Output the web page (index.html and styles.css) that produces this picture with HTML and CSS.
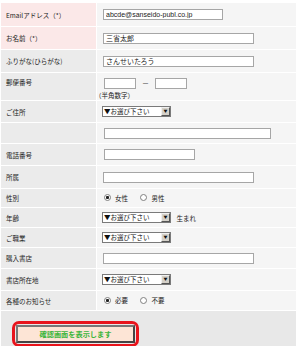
FILE: index.html
```html
<!DOCTYPE html>
<html>
<head>
  <meta charset="utf-8">
  <title>お問い合わせフォーム</title>
  <link rel="stylesheet" href="styles.css">
</head>
<body>
  <table class="form">
    <tr class="req h23">
      <th>Emailアドレス（*）</th>
      <td><input class="w-mail" type="text" value="abcde@sanseido-publ.co.jp"></td>
    </tr>
    <tr class="req h22">
      <th>お名前（*）</th>
      <td><input class="w-long" type="text" value="三省太郎"></td>
    </tr>
    <tr class="h22">
      <th>ふりがな(ひらがな)</th>
      <td><input class="w-long" type="text" value="さんせいたろう"></td>
    </tr>
    <tr class="h27">
      <th class="top">郵便番号</th>
      <td>
        <div class="zip">
          <input class="w-zip" type="text">
          <span class="dash">－</span>
          <input class="w-zip" type="text">
        </div>
        <div class="note">（半角数字）</div>
      </td>
    </tr>
    <tr class="h21">
      <th>ご住所</th>
      <td>
        <div class="select"><span class="opt">▼お選び下さい</span><span class="arrow">▼</span></div>
      </td>
    </tr>
    <tr class="h20">
      <th></th>
      <td><input class="w-addr" type="text"></td>
    </tr>
    <tr class="h21">
      <th>電話番号</th>
      <td><input class="w-tel" type="text"></td>
    </tr>
    <tr class="h22">
      <th>所属</th>
      <td><input class="w-long" type="text"></td>
    </tr>
    <tr class="h18">
      <th>性別</th>
      <td>
        <label class="choice"><input type="radio" name="sex" checked>女性</label>
        <label class="choice"><input type="radio" name="sex">男性</label>
      </td>
    </tr>
    <tr class="h19">
      <th>年齢</th>
      <td>
        <div class="select"><span class="opt">▼お選び下さい</span><span class="arrow">▼</span></div>
        <span class="after">生まれ</span>
      </td>
    </tr>
    <tr class="h19">
      <th>ご職業</th>
      <td>
        <div class="select"><span class="opt">▼お選び下さい</span><span class="arrow">▼</span></div>
      </td>
    </tr>
    <tr class="h20">
      <th>購入書店</th>
      <td><input class="w-long" type="text"></td>
    </tr>
    <tr class="h21">
      <th>書店所在地</th>
      <td>
        <div class="select"><span class="opt">▼お選び下さい</span><span class="arrow">▼</span></div>
      </td>
    </tr>
    <tr class="h19">
      <th>各種のお知らせ</th>
      <td>
        <label class="choice"><input type="radio" name="info" checked>必要</label>
        <label class="choice"><input type="radio" name="info">不要</label>
      </td>
    </tr>
    <tr class="submit-row">
      <td colspan="2">
        <div class="highlight">
          <button type="button" class="submit">確認画面を表示します</button>
        </div>
      </td>
    </tr>
  </table>
</body>
</html>
```

FILE: styles.css
```css
body {
  margin: 0;
  background: #fff;
  font-family: "Noto Sans CJK JP", "Liberation Sans", sans-serif;
  font-size: 6.5px;
  color: #222;
}
.form {
  margin-top: 2px;
  width: 297px;
  border-spacing: 1px;
  background: #fff;
}
.form th,
.form td {
  padding: 0;
  vertical-align: middle;
}
.form th {
  width: 90px;
  padding-left: 5px;
  text-align: left;
  font-weight: normal;
  background: #ebebeb;
}
.form th.top {
  vertical-align: top;
  padding-top: 4px;
}
.form tr.req th {
  background: #fbe8e8;
}
.form td {
  padding-left: 6px;
  background: #f5f5f5;
}
.h18 { height: 18px; }
.h19 { height: 19px; }
.h20 { height: 20px; }
.h21 { height: 21px; }
.h22 { height: 22px; }
.h23 { height: 23px; }
.h27 { height: 27px; }

input[type="text"] {
  display: block;
  box-sizing: border-box;
  height: 11px;
  margin: 0;
  padding: 0 2px;
  border: 1px solid #a6a6a6;
  background: #fff;
  font-family: "Liberation Sans", "Noto Sans CJK JP", sans-serif;
  font-size: 7px;
  color: #222;
  outline: none;
}
.w-mail { width: 120px; }
.w-long { width: 151px; }
.w-addr { width: 167px; margin-left: 1px !important; }
.w-tel { width: 91px; margin-left: 1px !important; }
.w-zip { width: 32px; }

.zip {
  display: flex;
  align-items: center;
  margin-top: 4px;
}
.zip .w-zip:first-child { margin-left: 1px; }
.dash {
  width: 19px;
  text-align: center;
  font-size: 7px;
}
.note {
  margin-left: -8px;
  margin-top: 2px;
  line-height: 9px;
}

.select {
  display: inline-flex;
  vertical-align: middle;
  box-sizing: border-box;
  width: 69px;
  height: 11px;
  margin-left: -1px;
  border: 1px solid #7a7a7a;
  background: #fff;
}
.select .opt {
  flex: 1;
  padding-left: 1px;
  line-height: 9px;
  font-size: 6.5px;
  color: #111;
  white-space: nowrap;
  overflow: hidden;
}
.select .arrow {
  box-sizing: border-box;
  width: 9px;
  height: 9px;
  border: 1px solid;
  border-color: #f0f0f0 #555 #555 #f0f0f0;
  background: #d4d0c8;
  font-size: 4px;
  line-height: 7px;
  text-align: center;
  color: #111;
}
.after {
  margin-left: 4px;
  vertical-align: middle;
}

.choice {
  display: inline-flex;
  align-items: center;
  margin-left: 1px;
  margin-right: 10px;
}
.choice input {
  appearance: none;
  -webkit-appearance: none;
  box-sizing: border-box;
  width: 7px;
  height: 7px;
  margin: 0 4px 0 0;
  border: 1px solid #808080;
  border-radius: 50%;
  background: #fff;
}
.choice input:checked {
  background: radial-gradient(circle, #222 0 1.3px, #fff 1.8px);
}

.submit-row td {
  height: 32px;
  padding: 4px 0 1px 11px;
  background: #e8e8e8;
  vertical-align: bottom;
}
.highlight {
  display: inline-block;
  padding: 1px;
  border: 3px solid #e8141c;
  border-radius: 7px;
}
.submit {
  display: block;
  width: 119px;
  height: 18px;
  margin: 0;
  padding: 0;
  border: 2px solid;
  border-color: #777 #444 #444 #777;
  background: #fde5d6;
  font-family: "Noto Sans CJK JP", sans-serif;
  font-size: 7.2px;
  font-weight: bold;
  color: #3bb53b;
  cursor: pointer;
}
```
